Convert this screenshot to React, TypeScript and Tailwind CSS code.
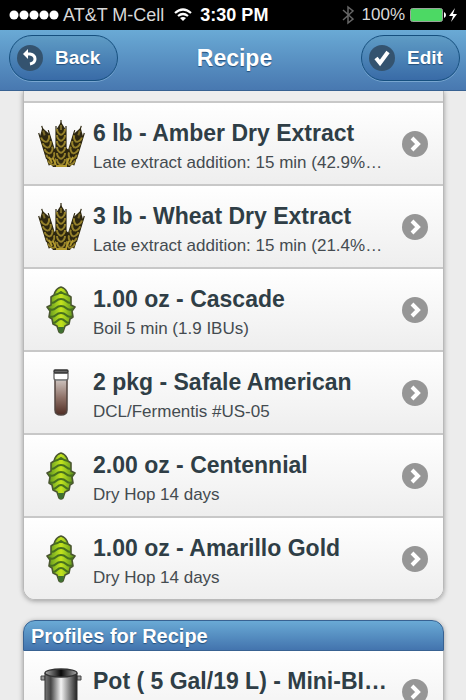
interface Item {
  id: number;
  title: string;
  detail: string;
  icon: 'grain' | 'hop' | 'yeast';
}

const items: Item[] = [
  { id: 1, title: '6 lb - Amber Dry Extract', detail: 'Late extract addition: 15 min (42.9%…', icon: 'grain' },
  { id: 2, title: '3 lb - Wheat Dry Extract', detail: 'Late extract addition: 15 min (21.4%…', icon: 'grain' },
  { id: 3, title: '1.00 oz - Cascade', detail: 'Boil 5 min (1.9 IBUs)', icon: 'hop' },
  { id: 4, title: '2 pkg - Safale American', detail: 'DCL/Fermentis #US-05', icon: 'yeast' },
  { id: 5, title: '2.00 oz - Centennial', detail: 'Dry Hop 14 days', icon: 'hop' },
  { id: 6, title: '1.00 oz - Amarillo Gold', detail: 'Dry Hop 14 days', icon: 'hop' },
];

// One ear of grain, drawn upright with its foot at 0,0
function Ear({ length }: { length: number }) {
  const kernels = [];
  for (let y = 4; y < length - 5; y += 6) kernels.push(-y);
  return (
    <g>
      <path d={`M-5 -2V${-length + 5}L0 ${-length - 3}L5 ${-length + 5}V-2Z`} fill="#2e270f" />
      <path d={`M0 0V${-length - 5}M-5 -9V${-length + 1}M5 -9V${-length + 1}`} stroke="#2e270f" strokeWidth="1.2" />
      {kernels.map(y => (
        <path key={y} d={`M0 ${y + 3}Q-4 ${y + 1} -4 ${y - 3}M0 ${y + 3}Q4 ${y + 1} 4 ${y - 3}`} fill="none" stroke="#94802a" strokeWidth="2" />
      ))}
      <path d={`M0 ${-length + 5}V${-length}`} stroke="#7a6a28" strokeWidth="2" />
    </g>
  );
}

function GrainIcon() {
  return (
    <svg width="48" height="48" viewBox="0 0 48 48" aria-hidden="true">
      <path d="M7 28L10 39L16 47H33L38 39L42 28L32 30L24 24L16 30Z" fill="#2e270f" />
      <g transform="translate(17 46) rotate(-17)"><Ear length={37} /></g>
      <g transform="translate(32 46) rotate(17)"><Ear length={37} /></g>
      <g transform="translate(24 46)"><Ear length={41} /></g>
      <path d="M15 43L12 37M19 45L16 38M29 45L32 38M33 43L36 37M19 46H30" stroke="#b39a2e" strokeWidth="1.8" />
    </svg>
  );
}

function HopIcon() {
  return (
    <svg width="30" height="48" viewBox="0 0 30 48" aria-hidden="true">
      <defs>
        <linearGradient id="hop" x1="0" x2="1">
          <stop offset="0" stopColor="#55881f" />
          <stop offset="0.35" stopColor="#9fcc20" />
          <stop offset="0.5" stopColor="#c5e31c" />
          <stop offset="0.65" stopColor="#9fcc20" />
          <stop offset="1" stopColor="#55881f" />
        </linearGradient>
      </defs>
      <path
        d="M15 1Q11 2 9 6L8 9L5 11L5 19L1 21L4 25L3 31L6 33L7 38L11 40L13 46Q15 48 17 46L19 40L23 38L24 33L27 31L26 25L29 21L25 19L25 11L22 9L21 6Q19 2 15 1Z"
        fill="url(#hop)"
        stroke="#4a5630"
        strokeWidth="1.6"
        strokeLinejoin="round"
      />
      <g fill="none" stroke="#47701e" strokeWidth="2">
        <path d="M8 9Q11 9 15 6Q19 9 22 9" />
        <path d="M5 17Q8 17 10 15Q12 13 15 13Q18 13 20 15Q22 17 25 17" />
        <path d="M3 23Q7 25 10 22Q12 20 15 20Q18 20 20 22Q23 25 27 23" />
        <path d="M4 30Q7 32 10 29Q12 27 15 27Q18 27 20 29Q23 32 26 30" />
        <path d="M7 37Q9 37 11 35Q13 33 15 33Q17 33 19 35Q21 37 23 37" />
      </g>
      <path d="M12 41L13 46Q15 48 17 46L18 41Z" fill="#3f7030" />
    </svg>
  );
}

function YeastIcon() {
  return (
    <svg width="18" height="48" viewBox="0 0 18 48" aria-hidden="true">
      <defs>
        <linearGradient id="tube" x1="0" y1="0" x2="0" y2="1">
          <stop offset="0" stopColor="#c9bdb8" />
          <stop offset="0.5" stopColor="#8d7066" />
          <stop offset="1" stopColor="#4f2c23" />
        </linearGradient>
      </defs>
      <path d="M3 5H15V41Q15 46 9 46Q3 46 3 41Z" fill="#fff" />
      <path d="M3 12H15V41Q15 46 9 46Q3 46 3 41Z" fill="url(#tube)" />
      <path d="M3 11V41Q3 46 9 46Q15 46 15 41V11" fill="none" stroke="#51443f" strokeWidth="1.5" />
      <path d="M2 4V9Q2 11 4 11H14Q16 11 16 9V4" fill="#fff" stroke="#666" strokeWidth="1.3" />
      <rect x="2" y="1" width="14" height="3" rx="1" fill="#666" stroke="#333" strokeWidth="1.3" />
    </svg>
  );
}

function PotIcon() {
  return (
    <svg width="42" height="48" viewBox="0 0 42 48" aria-hidden="true">
      <defs>
        <linearGradient id="steel" x1="0" x2="1">
          <stop offset="0" stopColor="#777" />
          <stop offset="0.18" stopColor="#444" />
          <stop offset="0.5" stopColor="#f4f4f4" />
          <stop offset="0.75" stopColor="#888" />
          <stop offset="1" stopColor="#222" />
        </linearGradient>
        <linearGradient id="inside" x1="0" x2="1">
          <stop offset="0" stopColor="#aaa" />
          <stop offset="0.5" stopColor="#080808" />
          <stop offset="1" stopColor="#aaa" />
        </linearGradient>
      </defs>
      <path d="M1 8H5V12H1ZM37 8H41V12H37Z" fill="#999" stroke="#444" />
      <path d="M5 5V43Q21 50 37 43V5Z" fill="url(#steel)" stroke="#333" />
      <ellipse cx="21" cy="5" rx="16" ry="4" fill="url(#inside)" stroke="#333" strokeWidth="1.4" />
    </svg>
  );
}

function Arrow() {
  return (
    <svg className="shrink-0" width="26" height="26" viewBox="0 0 26 26" aria-hidden="true">
      <circle cx="13" cy="13" r="13" fill="#969696" />
      <path d="M10 7L16 13L10 19" fill="none" stroke="#fff" strokeWidth="4" />
    </svg>
  );
}

const icons = { grain: <GrainIcon />, hop: <HopIcon />, yeast: <YeastIcon /> };

const rowClass = 'flex h-[81px] items-center bg-linear-to-b from-white to-[#eeeeee] pr-[15px] pl-3';
const iconClass = 'flex w-[50px] shrink-0 justify-center';
const textClass = 'ml-[7px] min-w-0 flex-1 pt-2';
const titleClass = 'block truncate text-[23px] leading-[30px] font-bold text-[#2f3e46]';
const detailClass = 'block h-[30px] truncate text-[17px] leading-[30px] text-[#444b50]';
const buttonClass =
  'flex h-[46px] items-center gap-3 rounded-full border border-[#16507f] bg-linear-to-b from-[#5f9cc5] to-[#396ba7] pl-[7px] text-[19px] font-bold text-white shadow-[0_1px_0_#78a6d0] [text-shadow:0_1px_1px_#254f7a]';

function StatusBar() {
  return (
    <div className="flex h-[30px] shrink-0 items-center bg-black pr-[7px] pl-[9px] text-[17px] text-[#d8d8d8]">
      <div className="flex flex-1 items-center text-[18px]">
        <svg width="50" height="10" viewBox="0 0 50 10" fill="#fff" aria-label="Signal">
          <circle cx="5" cy="5" r="4.5" />
          <circle cx="15" cy="5" r="4.5" />
          <circle cx="25" cy="5" r="4.5" />
          <circle cx="35" cy="5" r="4.5" />
          <circle cx="45" cy="5" r="4.5" />
        </svg>
        <span className="ml-1">AT&amp;T M-Cell</span>
        <svg className="ml-[10px]" width="18" height="14" viewBox="0 0 18 14" fill="none" stroke="#fff" strokeWidth="2.2" aria-label="Wi-Fi">
          <path d="M1 5Q9 -2 17 5M4 8Q9 4 14 8" />
          <path d="M9 13L6 10Q9 8 12 10Z" fill="#fff" stroke="none" />
        </svg>
        <span className="ml-2 font-bold text-white">3:30 PM</span>
      </div>
      <svg width="12" height="20" viewBox="0 0 12 20" fill="none" stroke="#666" strokeWidth="1.5" aria-label="Bluetooth">
        <path d="M1 5L11 14L6 18V2L11 6L1 15" />
      </svg>
      <span className="ml-2">100%</span>
      <svg className="ml-1" width="50" height="16" viewBox="0 0 50 16" aria-label="Battery charging">
        <rect x="1.5" y="1.5" width="32" height="13" rx="2" fill="#4cd964" stroke="#9aa39b" />
        <path d="M35 5Q37 6 37 8Q37 10 35 11Z" fill="#fff" />
        <path d="M46 1L40 9H44L42 15L48 7H44Z" fill="#fff" />
      </svg>
    </div>
  );
}

export default function App() {
  return (
    <div className="flex h-screen flex-col overflow-hidden border-r border-white bg-[#ececec] font-['Liberation_Sans',Arial,sans-serif]">
      <StatusBar />
      <header className="z-10 grid h-[61px] shrink-0 grid-cols-[1fr_auto_1fr] items-center border-b border-[#386292] bg-linear-to-b from-[#6aaad5] to-[#4878b0] pr-[6px] pb-1 pl-[9px]">
        <button type="button" className={`${buttonClass} w-[109px] justify-self-start`}>
          <svg width="26" height="26" viewBox="0 0 26 26" fill="none" aria-hidden="true">
            <circle cx="13" cy="13" r="13" fill="#34536f" />
            <path d="M9 9H13Q18 10 18 14Q18 18 13 19" stroke="#fff" strokeWidth="3" />
            <path d="M11 4V14L6 9Z" fill="#fff" />
          </svg>
          Back
        </button>
        <h1 className="text-[23px] font-bold text-white [text-shadow:0_1px_1px_#254f7a]">Recipe</h1>
        <button type="button" className={`${buttonClass} w-[99px] justify-self-end`}>
          <svg width="26" height="26" viewBox="0 0 26 26" fill="none" aria-hidden="true">
            <circle cx="13" cy="13" r="13" fill="#34536f" />
            <path d="M7 13L11 18L19 7" stroke="#fff" strokeWidth="4" />
          </svg>
          Edit
        </button>
      </header>

      <main className="flex-1 overflow-hidden pr-[22px] pl-[23px]">
        <ul className="overflow-hidden rounded-b-xl border-x border-b border-[#b9b9b9] shadow-[0_1px_5px_rgba(0,0,0,0.35)]">
          <li className="h-[10px] bg-[#eeeeee]" />
          {items.map(item => (
            <li key={item.id} className="border-t-2 border-[#c8c8c8]">
              <a href="#" className={rowClass}>
                <span className={iconClass}>{icons[item.icon]}</span>
                <span className={textClass}>
                  <span className={titleClass}>{item.title}</span>
                  <span className={detailClass}>{item.detail}</span>
                </span>
                <Arrow />
              </a>
            </li>
          ))}
        </ul>

        <section className="mt-5 rounded-t-xl shadow-[0_1px_5px_rgba(0,0,0,0.35)]">
          <h2 className="h-[31px] rounded-t-xl border border-[#386292] bg-linear-to-b from-[#6aaad5] to-[#4374ae] px-[7px] text-[20px] leading-[30px] font-bold text-white [text-shadow:0_1px_1px_#254f7a]">
            Profiles for Recipe
          </h2>
          <a href="#" className={`${rowClass} border-x border-[#b9b9b9]`}>
            <span className={iconClass}><PotIcon /></span>
            <span className={textClass}>
              <span className={titleClass}>Pot ( 5 Gal/19 L) - Mini-BI…</span>
              <span className={detailClass} />
            </span>
            <Arrow />
          </a>
        </section>
      </main>
    </div>
  );
}
